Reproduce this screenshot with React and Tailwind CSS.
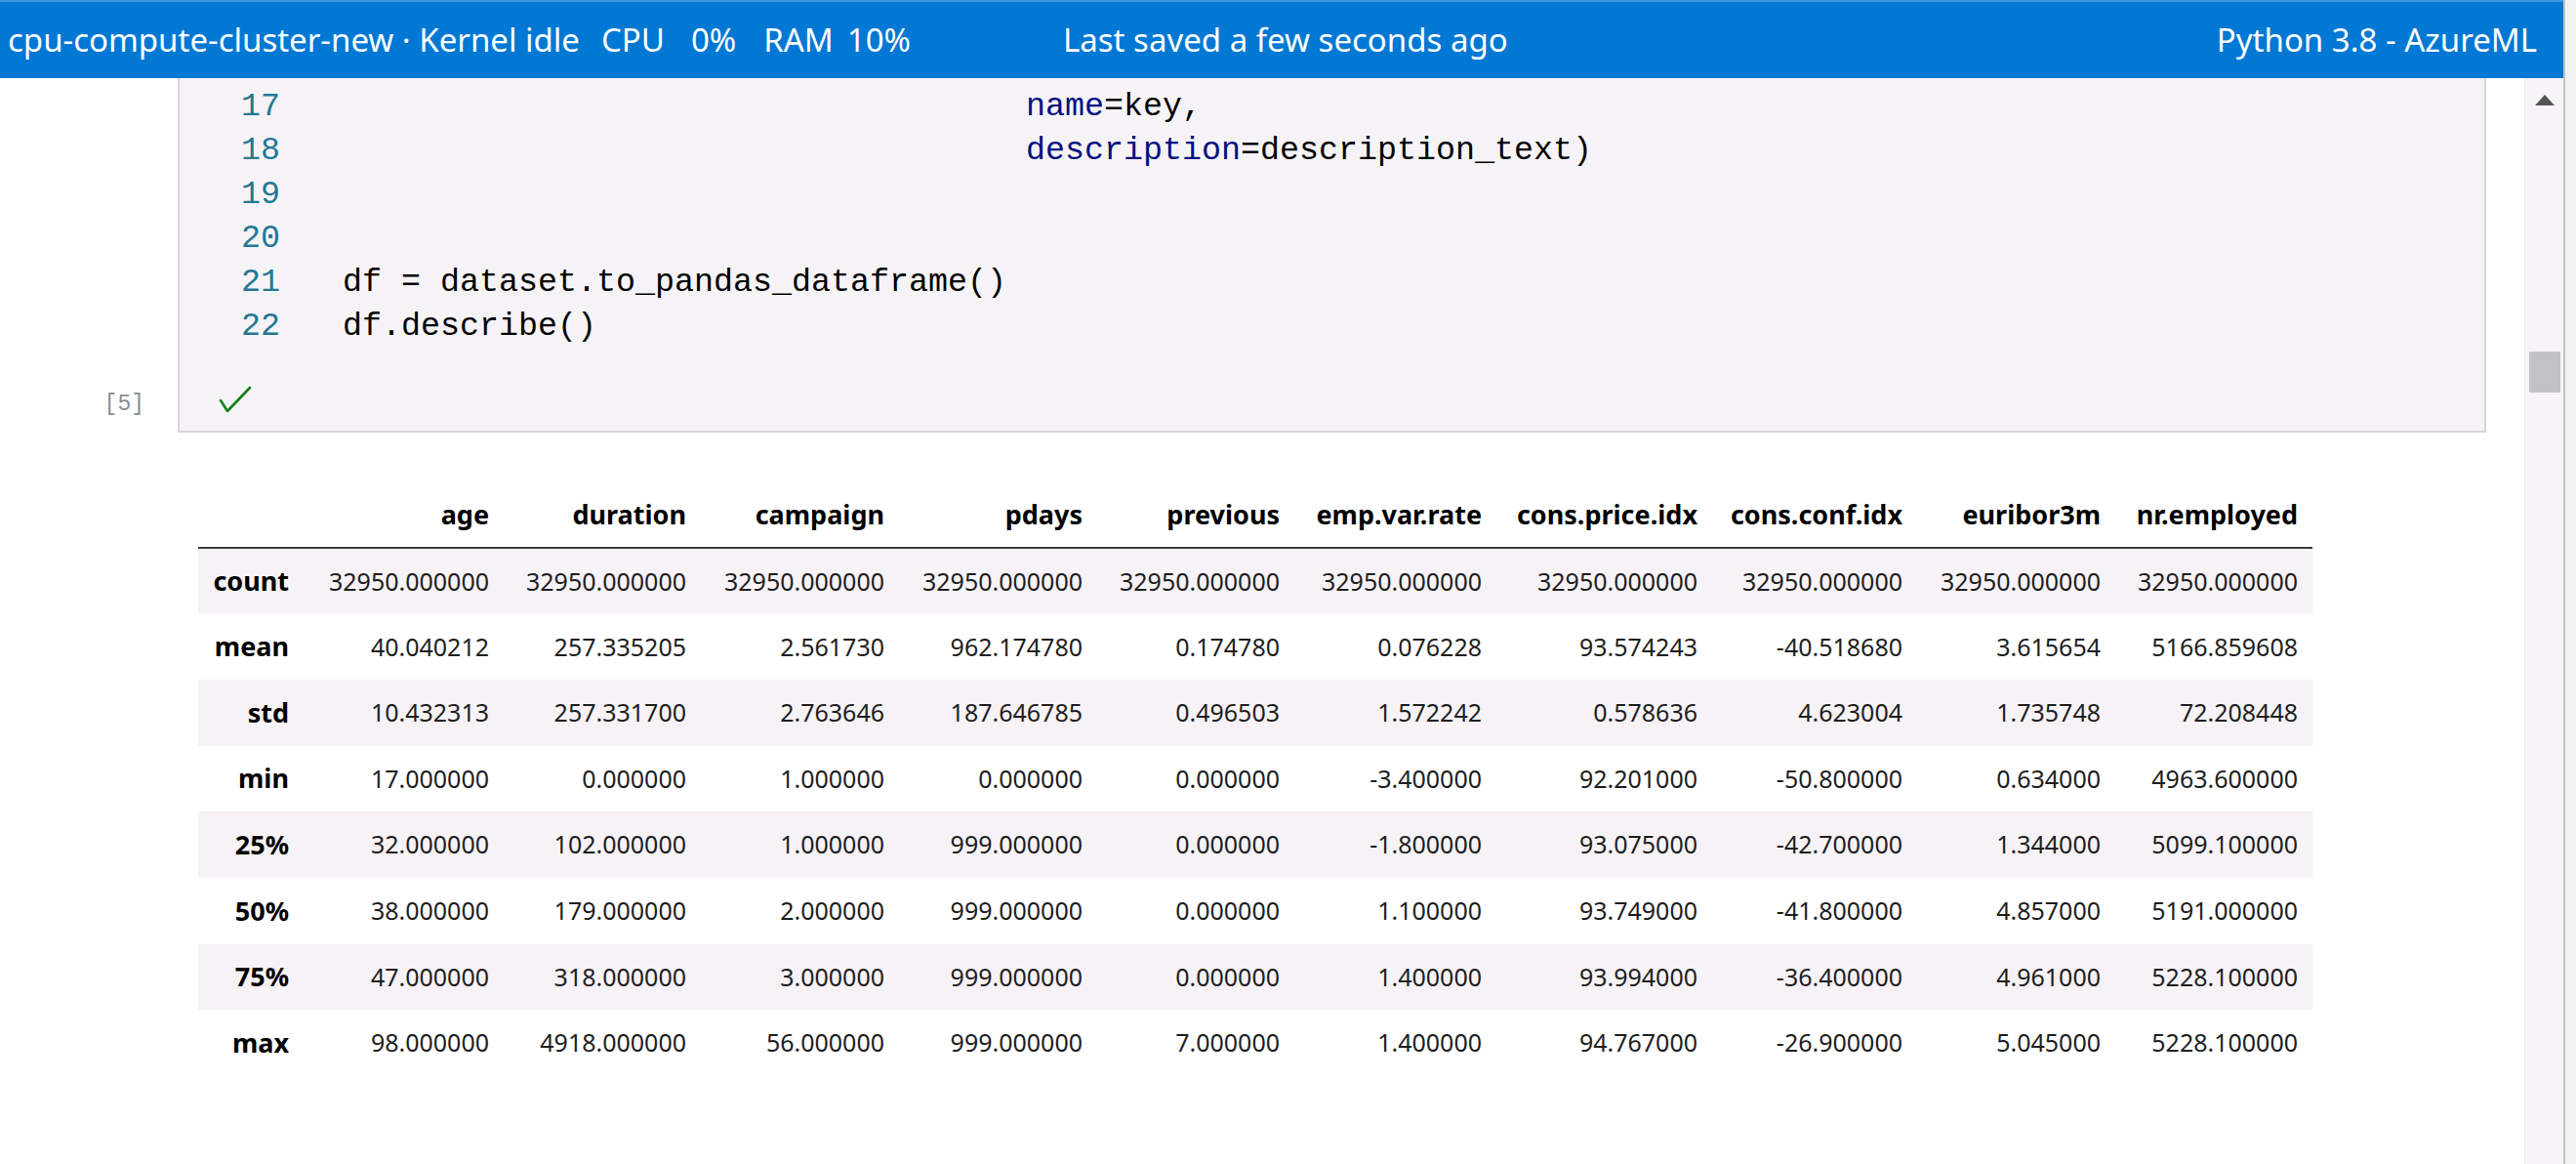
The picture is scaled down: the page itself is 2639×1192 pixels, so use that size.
import React from 'react';

const pad = (n) => ' '.repeat(n);

// line 16 sits under the header, only its slot is kept
const codeLines = [
  { n: 16, parts: [], hidden: true },
  { n: 17, parts: [[pad(35)], ['name', true], ['=key,']] },
  { n: 18, parts: [[pad(35)], ['description', true], ['=description_text)']] },
  { n: 19, parts: [] },
  { n: 20, parts: [] },
  { n: 21, parts: [['df = dataset.to_pandas_dataframe()']] },
  { n: 22, parts: [['df.describe()']] },
];

const columns = [
  ['age', 'w-[205px]'],
  ['duration', 'w-[202px]'],
  ['campaign', 'w-[203px]'],
  ['pdays', 'w-[203px]'],
  ['previous', 'w-[202px]'],
  ['emp.var.rate', 'w-[207px]'],
  ['cons.price.idx', 'w-[221px]'],
  ['cons.conf.idx', 'w-[210px]'],
  ['euribor3m', 'w-[203px]'],
  ['nr.employed', 'w-[202px]'],
];

const rows = [
  ['count', Array(10).fill('32950.000000')],
  ['mean', ['40.040212', '257.335205', '2.561730', '962.174780', '0.174780', '0.076228', '93.574243', '-40.518680', '3.615654', '5166.859608']],
  ['std', ['10.432313', '257.331700', '2.763646', '187.646785', '0.496503', '1.572242', '0.578636', '4.623004', '1.735748', '72.208448']],
  ['min', ['17.000000', '0.000000', '1.000000', '0.000000', '0.000000', '-3.400000', '92.201000', '-50.800000', '0.634000', '4963.600000']],
  ['25%', ['32.000000', '102.000000', '1.000000', '999.000000', '0.000000', '-1.800000', '93.075000', '-42.700000', '1.344000', '5099.100000']],
  ['50%', ['38.000000', '179.000000', '2.000000', '999.000000', '0.000000', '1.100000', '93.749000', '-41.800000', '4.857000', '5191.000000']],
  ['75%', ['47.000000', '318.000000', '3.000000', '999.000000', '0.000000', '1.400000', '93.994000', '-36.400000', '4.961000', '5228.100000']],
  ['max', ['98.000000', '4918.000000', '56.000000', '999.000000', '7.000000', '1.400000', '94.767000', '-26.900000', '5.045000', '5228.100000']],
];

const Header = () => (
  <header className="flex h-[80px] shrink-0 items-center border-t-2 border-[#3f95dc] bg-[#0078d4] pr-[27px] font-['Noto_Sans',sans-serif] text-[33px] text-white">
    <div className="flex w-[1089px] shrink-0 items-center whitespace-pre pl-[8px]">
      <span>cpu-compute-cluster-new · Kernel idle</span>
      <span className="ml-[22px]">CPU</span>
      <span className="ml-[27px]">0%</span>
      <span className="ml-[28px]">RAM</span>
      <span className="ml-[14px]">10%</span>
    </div>
    <span>Last saved a few seconds ago</span>
    <span className="ml-auto">Python 3.8 - AzureML</span>
  </header>
);

const CodeCell = () => (
  <div className="flex -mt-[38px]">
    <div className="flex w-[182px] shrink-0 flex-col justify-end pb-[14px] pr-[34px] text-right font-['Liberation_Mono',monospace] text-[23px] leading-[30px] text-[#8c8c8c]">
      [5]
    </div>
    <div className="mr-[39px] flex-1 border-x-2 border-b-2 border-[#d8d5d8] bg-[#f6f3f6]">
      <div className="font-['Liberation_Mono',monospace] text-[33.33px] leading-[45px]">
        {codeLines.map((line) => (
          <div key={line.n} className="flex h-[45px]">
            <div className="w-[103px] shrink-0 text-right text-[#237893]">{line.hidden ? '' : line.n}</div>
            <div className="whitespace-pre pl-[64px] text-black">
              {line.parts.map(([text, param], i) => (
                <span key={i} className={param ? 'text-[#001080]' : ''}>{text}</span>
              ))}
            </div>
          </div>
        ))}
      </div>
      <div className="flex h-[84px] items-start pl-[40px] pt-[38px]">
        <svg width="34" height="28" viewBox="0 0 34 28" fill="none">
          <polyline points="2,15 9,26 32,2" stroke="#13821a" strokeWidth="2.6" strokeLinecap="round" strokeLinejoin="round" />
        </svg>
      </div>
    </div>
  </div>
);

const DescribeTable = () => (
  <div className="mt-[51px] pl-[203px]">
    <table className="table-fixed border-collapse font-['Noto_Sans',sans-serif] text-[25px]">
      <thead>
        <tr className="h-[67px] border-b-2 border-[#3c3c3c]">
          <th className="w-[108px]" />
          {columns.map(([name, w]) => (
            <th key={name} className={`${w} pr-[15px] text-right text-[27px] font-bold text-black`}>
              {name}
            </th>
          ))}
        </tr>
      </thead>
      <tbody>
        {rows.map(([label, values], r) => (
          <tr key={label} className={`h-[67.6px] ${r % 2 === 0 ? 'bg-[#f6f2f6]' : 'bg-white'}`}>
            <th className="pr-[15px] text-right text-[27px] font-bold text-black">{label}</th>
            {values.map((v, i) => (
              <td key={i} className="pr-[15px] text-right text-[#1e1e1e]">{v}</td>
            ))}
          </tr>
        ))}
      </tbody>
    </table>
  </div>
);

const Scrollbar = () => (
  <div className="flex w-[40px] shrink-0 flex-col items-center border-l border-[#efebef] bg-[#f7f4f7] pt-[17px]">
    <svg width="20" height="11" viewBox="0 0 20 11">
      <polygon points="10,0 20,11 0,11" fill="#555" />
    </svg>
    <div className="mt-[252px] h-[42px] w-[32px] bg-[#c3c2c6]" />
  </div>
);

export default function App() {
  return (
    <div className="flex h-[1192px] w-[2639px] overflow-hidden bg-white">
      <div className="flex min-w-0 flex-1 flex-col">
        <Header />
        <div className="flex min-h-0 flex-1">
          <main className="min-w-0 flex-1 overflow-hidden">
            <CodeCell />
            <DescribeTable />
          </main>
          <Scrollbar />
        </div>
      </div>
      <div className="w-[13px] shrink-0 border-l-2 border-[#c4c4c4] bg-[#f2f2f2]" />
    </div>
  );
}
